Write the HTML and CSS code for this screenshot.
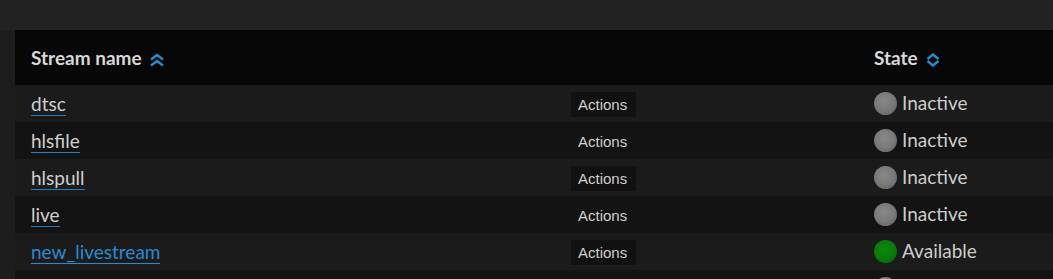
FILE: index.html
```html
<!DOCTYPE html>
<html>
<head>
<meta charset="utf-8">
<link rel="stylesheet" href="styles.css">
</head>
<body>
<div class="page">
  <table class="streams">
    <thead>
      <tr>
        <th class="c-name">Stream name <svg class="sort" width="14" height="14" viewBox="0 0 14 14"><path d="M1 6.5 L7 2 L13 6.5 M1 12.5 L7 8 L13 12.5" fill="none" stroke="#2a8ad0" stroke-width="2.4"/></svg></th>
        <th class="c-act"></th>
        <th class="c-state">State <svg class="sort" width="14" height="14" viewBox="0 0 14 14"><path d="M1.5 6 L7 1.5 L12.5 6 M1.5 8 L7 12.5 L12.5 8" fill="none" stroke="#2a8ad0" stroke-width="2.4"/></svg></th>
      </tr>
    </thead>
    <tbody>
      <tr><td class="c-name"><a href="#">dtsc</a></td><td class="c-act"><button>Actions</button></td><td class="c-state"><span class="dot gray"></span>Inactive</td></tr>
      <tr><td class="c-name"><a href="#">hlsfile</a></td><td class="c-act"><button>Actions</button></td><td class="c-state"><span class="dot gray"></span>Inactive</td></tr>
      <tr><td class="c-name"><a href="#">hlspull</a></td><td class="c-act"><button>Actions</button></td><td class="c-state"><span class="dot gray"></span>Inactive</td></tr>
      <tr><td class="c-name"><a href="#">live</a></td><td class="c-act"><button>Actions</button></td><td class="c-state"><span class="dot gray"></span>Inactive</td></tr>
      <tr><td class="c-name"><a href="#" class="active">new_livestream</a></td><td class="c-act"><button>Actions</button></td><td class="c-state"><span class="dot green"></span>Available</td></tr>
      <tr class="partial"><td class="c-name"></td><td class="c-act"></td><td class="c-state"><span class="dot gray"></span></td></tr>
    </tbody>
  </table>
</div>
</body>
</html>
```

FILE: styles.css
```css
html, body {
  margin: 0;
  padding: 0;
  overflow: hidden;
}
body {
  background: linear-gradient(#222 0, #222 30px, #1d1d1d 30px);
}
.page {
  margin-left: 15px;
  padding-top: 30px;
  font-family: Lato, "Open Sans", sans-serif;
  color: #ccc;
}
.streams {
  border-collapse: collapse;
  width: 1100px;
  table-layout: fixed;
}
.streams th {
  background: #070707;
  height: 55px;
  padding: 0;
  text-align: left;
  font-size: 19px;
  font-weight: 700;
  color: #d8d8d8;
  vertical-align: middle;
}
.streams td {
  height: 37px;
  padding: 0;
  font-size: 19px;
  vertical-align: middle;
}
.streams tbody tr:nth-child(odd) td { background: #1b1b1b; }
.streams tbody tr:nth-child(even) td { background: #131313; }
.streams th.c-name, .streams td.c-name { width: 540px; padding-left: 16px; }
.c-act { width: 303px; }
.sort { vertical-align: -2px; margin-left: 4px; }
a {
  color: #cfcfcf;
  text-decoration: none;
  border-bottom: 1px solid #1f7ec0;
  line-height: 19px;
}
a.active { color: #2a8ad0; border-bottom-color: #2a8ad0; }
button {
  font-family: "Liberation Sans", Arial, sans-serif;
  font-size: 15px;
  color: #cfcfcf;
  background: #111;
  border: 0;
  padding: 0 7px;
  height: 25px;
  width: 65px;
  text-align: left;
  vertical-align: middle;
}
.streams tbody tr:nth-child(even) button { background: #131313; }
.dot {
  display: inline-block;
  width: 23px;
  height: 23px;
  border-radius: 50%;
  vertical-align: middle;
  margin-right: 5px;
  position: relative;
  top: -1px;
}
.dot.gray { background: radial-gradient(circle at 45% 40%, #888 0, #7a7a7a 50%, #666 85%, #8a8a8a 100%); }
.dot.green { background: radial-gradient(circle at 45% 40%, #0c8a0c 0, #077a07 55%, #056005 90%, #0a6a0a 100%); }
```
